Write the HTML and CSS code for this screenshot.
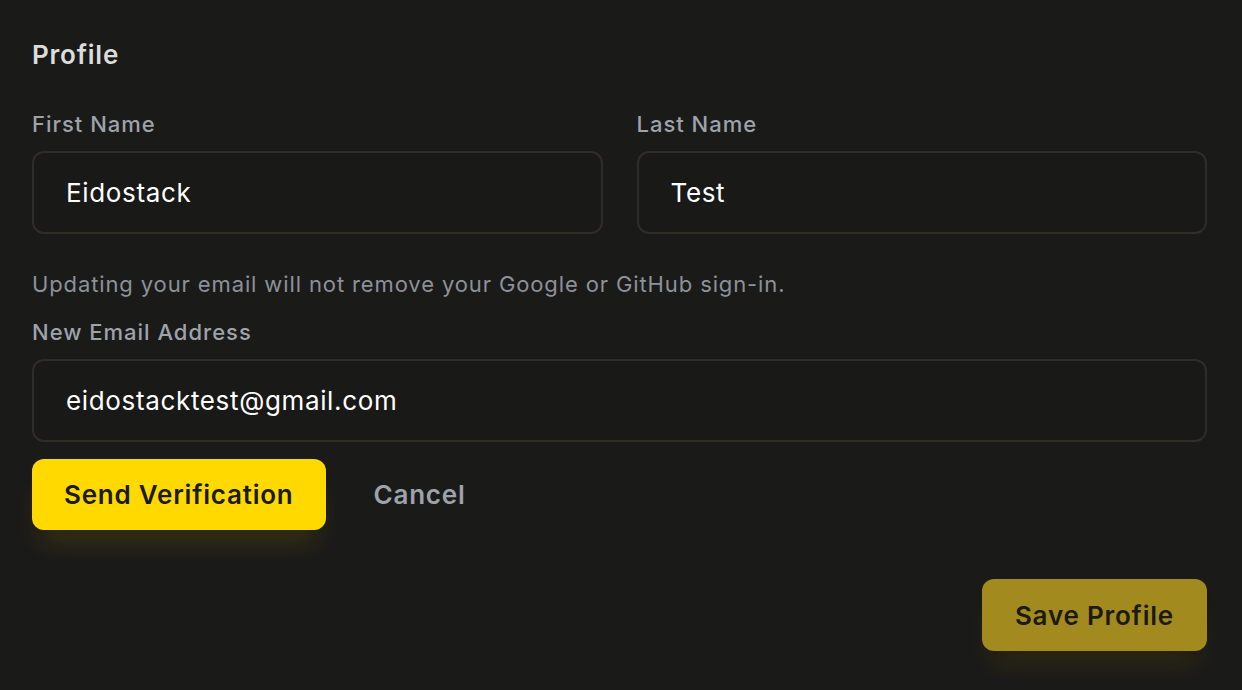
FILE: index.html
```html
<!DOCTYPE html>
<html>
<head>
<meta charset="utf-8">
<link rel="stylesheet" href="styles.css">
</head>
<body>
<main class="panel">
  <h2 class="title">Profile</h2>
  <div class="name-grid">
    <div class="field">
      <label class="label">First Name</label>
      <div class="input">Eidostack</div>
    </div>
    <div class="field">
      <label class="label">Last Name</label>
      <div class="input">Test</div>
    </div>
  </div>
  <p class="help">Updating your email will not remove your Google or GitHub sign-in.</p>
  <div class="field">
    <label class="label">New Email Address</label>
    <div class="input">eidostacktest@gmail.com</div>
  </div>
  <div class="actions">
    <button class="btn btn-primary">Send Verification</button>
    <button class="btn btn-ghost">Cancel</button>
  </div>
  <div class="footer">
    <button class="btn btn-save">Save Profile</button>
  </div>
</main>
</body>
</html>
```

FILE: styles.css
```css
* { box-sizing: border-box; }
html, body {
  margin: 0;
  height: 100%;
  background: #1a1a19;
}
body {
  font-family: Inter, "Noto Sans", sans-serif;
  color: #f5f5f5;
  overflow: hidden;
}
.panel {
  padding: 37px 35px 0 32px;
  display: flex;
  flex-direction: column;
}
.title {
  margin: 0;
  font-size: 26px;
  line-height: 36px;
  font-weight: 600;
  letter-spacing: 0.03em;
  color: #dcdcdc;
}
.name-grid {
  margin-top: 35px;
  display: grid;
  grid-template-columns: 1fr 1fr;
  column-gap: 34px;
}
.field {
  display: flex;
  flex-direction: column;
  gap: 11px;
}
.label {
  font-size: 22px;
  line-height: 32px;
  font-weight: 500;
  letter-spacing: 0.045em;
  color: #9ea2aa;
}
.input {
  height: 83px;
  border: 2px solid #302d28;
  border-radius: 12px;
  background: #191918;
  padding: 0 32px;
  display: flex;
  align-items: center;
  font-size: 26px;
  letter-spacing: 0.025em;
  color: #ffffff;
}
.help {
  margin: 34px 0 16px;
  font-size: 22px;
  line-height: 32px;
  letter-spacing: 0.04em;
  color: #8d9199;
}
.actions {
  margin-top: 17px;
  display: flex;
  align-items: center;
  gap: 48px;
}
.btn {
  font-family: inherit;
  font-size: 26px;
  font-weight: 600;
  letter-spacing: 0.03em;
  border: none;
  border-radius: 12px;
  cursor: pointer;
}
.btn-primary {
  height: 71px;
  padding: 0 32px;
  background: #ffd900;
  color: #1a1a19;
  box-shadow: 0 20px 26px -8px rgba(255, 217, 0, 0.14), 0 10px 12px -6px rgba(0, 0, 0, 0.3);
}
.btn-ghost {
  background: transparent;
  padding: 0;
  color: #9ea2aa;
}
.footer {
  margin-top: 49px;
  display: flex;
  justify-content: flex-end;
}
.btn-save {
  height: 72px;
  padding: 0 33px;
  background: #a38a1f;
  color: #1c1a14;
  box-shadow: 0 20px 26px -8px rgba(255, 217, 0, 0.1), 0 10px 12px -6px rgba(0, 0, 0, 0.3);
}
```
